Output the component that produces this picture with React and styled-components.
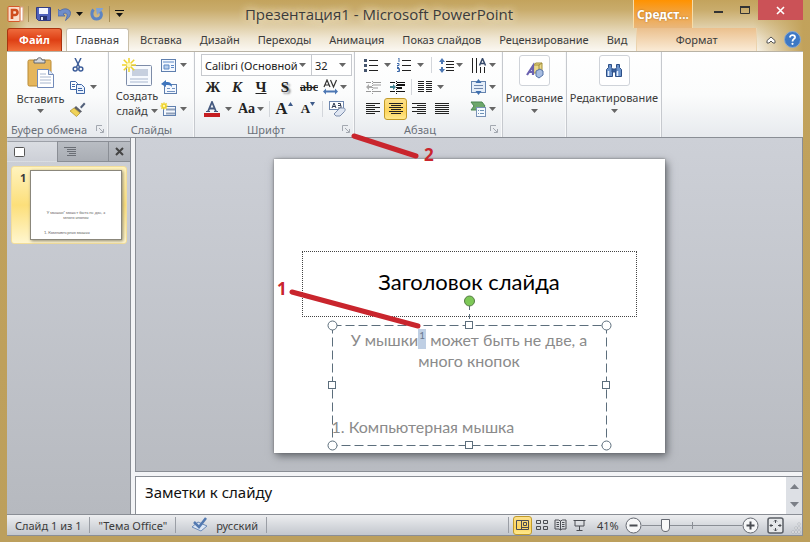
import { useState } from 'react'
import styled, { createGlobalStyle, css } from 'styled-components'

const GlobalStyle = createGlobalStyle`
    * {
        box-sizing: border-box;
    }

    body {
        margin: 0;
        background: #BC9F5C;
        font-family: 'Noto Sans', 'Open Sans', sans-serif;
        font-size: 12px;
        color: #3B3B3B;
    }

    button, select, textarea {
        font: inherit;
        color: inherit;
    }

    svg {
        display: block;
        flex: none;
    }
`

const Window = styled.div`
    display: flex;
    flex-direction: column;
    min-height: 100vh;
    padding: 0 7px 6px;
    background: linear-gradient(#C2A25B, #BC9F5C);
`

const Header = styled.header`
    background:
        linear-gradient(90deg, #C2A25B, transparent 20px, transparent calc(100% - 50px), #C2A25B),
        linear-gradient(#C3A35D 0px, #C9AC6C 10px, #DCC99E 24px, #EFE6D2 38px, #FBF8F2 51px);
`

const TitleBar = styled.div`
    display: flex;
    height: 28px;
`

const QuickAccess = styled.div`
    display: flex;
    align-items: center;
    gap: 3px;
    width: 118px;
`

const IconButton = styled.button`
    display: flex;
    align-items: center;
    justify-content: center;
    gap: ${({ $gap }) => $gap || 0}px;
    width: ${({ $width }) => $width || 24}px;
    height: ${({ $height }) => $height || 22}px;
    padding: 0;
    border: 1px solid transparent;
    border-radius: 3px;
    background: none;

    ${({ $active }) => $active && css`
        border-color: #C29B29;
        background: linear-gradient(#FCE08A, #FDD55E 60%, #FFE98E);
    `}

    &:hover {
        border-color: #E0C060;
    }
`

const Divider = styled.span`
    width: 1px;
    height: ${({ $height }) => $height || 16}px;
    background: ${({ $color }) => $color || '#D3D6DB'};
    margin: 0 ${({ $space }) => $space || 0}px;
`

const WindowTitle = styled.h1`
    flex: 1;
    margin: 0;
    font-family: 'Open Sans', sans-serif;
    font-size: 15px;
    line-height: 28px;
    font-weight: normal;
    text-align: center;
    white-space: nowrap;
    text-shadow: 0 0 8px #F4EAD0, 0 0 8px #F4EAD0;
`

const ContextTitle = styled.div`
    width: 60px;
    border: solid #F7DDA8;
    border-width: 0 1px;
    background: linear-gradient(#FF9200, #F3A23A 12px, #E9B77C);
    color: #FFF;
    font-weight: bold;
    line-height: 30px;
    text-align: center;
    text-shadow: 0 0 2px #A06820;
`

const WindowButtons = styled.div`
    display: flex;
    width: 110px;
    justify-content: flex-end;
`

const CloseButton = styled(IconButton)`
    border-radius: 0;
    background: #CB5257;
`

const TabRow = styled.nav`
    display: flex;
    height: 23px;
`

const Tab = styled.button`
    height: 23px;
    padding: 0 8px 1px;
    border: 1px solid transparent;
    border-bottom: none;
    border-radius: 3px 3px 0 0;
    background: none;
    white-space: nowrap;
    font-size: 11px;

    ${({ $active }) => $active && css`
        margin: 0 2px 0 4px;
        padding: 0 9px 1px;
        border-color: #C9BFA9;
        background: #FFF;
    `}
`

const FileTab = styled(Tab)`
    width: 56px;
    padding: 0 0 1px;
    border-color: #A9330F;
    background: linear-gradient(#EE6B3D, #DE3F14 50%, #F2703B);
    color: #FFF;
    font-weight: bold;
`

const ContextTab = styled(Tab)`
    width: 123px;
    margin-left: auto;
    border: solid #EBD3AE;
    border-width: 0 1px;
    border-radius: 0;
    background: linear-gradient(#EBC08D, #FAEBD6);
`

const HelpArea = styled.div`
    display: flex;
    align-items: center;
    justify-content: flex-end;
    width: 47px;
`

const Ribbon = styled.section`
    display: flex;
    height: 87px;
    border-top: 1px solid #B9B3A5;
    border-bottom: 1px solid #8A8E95;
    background: linear-gradient(#FFF, #FBFCFC 50%, #E7EAEE);
`

const Group = styled.section`
    display: flex;
    flex-direction: column;
    width: ${({ $width }) => $width}px;
    padding-top: 2px;
    border-right: 1px solid #C6C9CE;
    box-shadow: inset -1px 0 #F8F9FA;
`

const GroupBody = styled.div`
    display: flex;
    height: 67px;
    padding: 0 ${({ $space }) => $space || 0}px;
`

const GroupLabel = styled.footer`
    display: flex;
    align-items: center;
    height: 16px;
    color: #6A7079;
    font-size: 11px;

    span {
        flex: 1;
        text-align: center;
        white-space: nowrap;
    }

    button {
        margin: 0 4px;
    }
`

const Stack = styled.div`
    display: flex;
    flex-direction: column;
`

const Row = styled.div`
    display: flex;
    align-items: center;
    height: 22px;
`

const LargeButton = styled.button`
    display: flex;
    flex-direction: column;
    align-items: center;
    width: ${({ $width }) => $width}px;
    padding: ${({ $top }) => $top || 0}px 0 0;
    border: none;
    background: none;
    font-size: 11px;
    line-height: 15px;
    white-space: nowrap;
    gap: ${({ $gap }) => $gap || 0}px;
`

const Inline = styled.span`
    display: flex;
    align-items: center;
    gap: 3px;
`

const Framed = styled.span`
    display: flex;
    align-items: center;
    justify-content: center;
    width: 31px;
    height: 31px;
    border: 1px solid #CFD3D9;
    border-radius: 3px;
    background: #FFF;
`

const Combo = styled.label`
    display: flex;
    align-items: center;
    width: ${({ $width }) => $width}px;
    height: 22px;
    margin-right: -1px;
    border: 1px solid #C6C9CE;
    background: #FFF;
    padding-right: 5px;

    select {
        flex: 1;
        min-width: 0;
        height: 20px;
        padding: 0 0 0 3px;
        border: none;
        background: none;
        appearance: none;
        outline: none;
        font-size: 11px;
        color: #222;
    }
`

const Glyph = styled.span`
    font-family: 'Liberation Serif', serif;
    font-size: ${({ $size }) => $size || 15}px;
    line-height: 16px;
    font-weight: bold;
    color: #222;
    ${({ $italic }) => $italic && 'font-style: italic;'}
    ${({ $line }) => $line && `text-decoration: ${$line};`}
    ${({ $shadow }) => $shadow && 'text-shadow: 2px 2px 2px #888;'}
`

const Workspace = styled.main`
    display: flex;
    flex: 1;
    min-height: 0;
    border-right: 1px solid #8A8E95;
    background: linear-gradient(#CDD0D7, #B6B9BF);
`

const Pane = styled.aside`
    width: 124px;
    border-right: 1px solid #8A8E95;
    padding-top: 3px;
`

const PaneTabs = styled.div`
    display: flex;
    height: 21px;
`

const PaneTab = styled.button`
    width: ${({ $width }) => $width}px;
    padding: 0 0 0 6px;
    border: solid #8A8E95;
    border-width: 1px 0 1px 1px;
    background: linear-gradient(#B9BDC3, #A9ADB4);

    ${({ $active }) => $active && css`
        border-color: #9DA1A8 transparent transparent;
        background: linear-gradient(#DADDE2, #CDD0D7);
    `}
`

const Thumbnail = styled.button`
    display: flex;
    width: 116px;
    height: 78px;
    margin: 4px 0 0 4px;
    padding: 3px 4px 0 8px;
    border: 1px solid #F3DE9A;
    border-radius: 3px;
    background: linear-gradient(#FFF3BE, #FCDF7A 50%, #FFF6CF);
    font-size: 11px;
    font-weight: bold;
    text-align: left;
`

const ThumbSlide = styled.span`
    display: flex;
    flex-direction: column;
    width: 92px;
    height: 70px;
    margin-left: auto;
    padding: 39px 13px 0;
    border: 1px solid #8B877B;
    background: #FFF;
    box-shadow: 1px 1px 3px #8F8A78;
    font: 4px/5px 'Lato', sans-serif;
    color: #666;
    text-align: center;
    white-space: nowrap;
`

const ThumbNote = styled.span`
    margin-top: 10px;
    text-align: left;
`

const Editor = styled.div`
    display: flex;
    flex-direction: column;
    flex: 1;
    min-width: 0;
    border-left: 4px solid #F3F4F6;
`

const Canvas = styled.section`
    display: flex;
    align-items: center;
    justify-content: center;
    flex: 1;
    border-left: 1px solid #8A8E95;
    padding-top: 3px;
`

const Slide = styled.article`
    position: relative;
    width: 391px;
    aspect-ratio: 4 / 3;
    padding-top: 92px;
    background: #FFF;
    box-shadow: 2px 3px 8px #606369, 0 0 2px #777;
    font-family: 'Lato', 'Open Sans', sans-serif;
`

const SlideTitle = styled.h2`
    display: flex;
    align-items: center;
    justify-content: center;
    height: 66px;
    margin: 0 28px 8px;
    padding-bottom: 6px;
    border: 1px dotted #444;
    color: #000;
    font-size: 22px;
    font-weight: normal;
`

const TextFrame = styled.div`
    position: relative;
    height: 121px;
    margin: 0 58px;
    padding-top: 4px;
    color: #8B8B8B;
    font-size: 16px;
    line-height: 21px;

    p {
        margin: 0;
        text-align: center;
    }

    ol {
        margin: 45px 0 0;
        padding: 0;
        list-style-position: inside;
    }
`

const Selected = styled.sup`
    display: inline-block;
    height: 20px;
    padding: 0 1px;
    background: #BFCFE4;
    color: #6B7A90;
    font-size: 10px;
    line-height: 13px;
    vertical-align: top;
`

const FrameHandles = styled.svg`
    position: absolute;
    left: 0;
    top: 0;
    overflow: visible;
`

const Callouts = styled.svg`
    position: absolute;
    left: 0;
    top: 0;
    overflow: visible;
    font: bold 17px 'Open Sans', sans-serif;
    pointer-events: none;
`

const Notes = styled.div`
    display: flex;
    height: 43px;
    border: solid #8A8E95;
    border-width: 1px 0 0;
    padding-top: 4px;
    background: #F3F4F6;

    textarea {
        flex: 1;
        resize: none;
        border: solid #8A8E95;
        border-width: 1px 0 0 1px;
        padding: 5px 9px;
        outline: none;
        overflow: hidden;
        background: #FFF;
        color: #111;
        font-size: 15px;
        line-height: 20px;
    }
`

const ScrollBar = styled.div`
    display: flex;
    flex-direction: column;
    justify-content: space-around;
    width: 16px;
    border-top: 1px solid #8A8E95;
    background: #DDE0E5;
`

const StatusBar = styled.footer`
    display: flex;
    align-items: center;
    height: 22px;
    border: 1px solid #8A8E95;
    border-width: 1px 1px 1px 0;
    padding-left: 8px;
    background: linear-gradient(#EDEEF0, #D3D6DB 60%, #C3C7CD);
    font-size: 11px;
    white-space: nowrap;
`

const Spacer = styled.span`
    flex: 1;
`

const Percent = styled.span`
    width: 36px;
    padding-left: 8px;
`

const Zoom = styled.input`
    width: 100px;
    height: 16px;
    margin: 0;
    appearance: none;
    background:
        linear-gradient(#8A8E95, #8A8E95) 50% 50% / 1px 7px no-repeat,
        linear-gradient(#8A8E95, #8A8E95) 0 50% / 100% 1px no-repeat;

    &::-webkit-slider-thumb {
        appearance: none;
        width: 9px;
        height: 13px;
        border: 1px solid #666A72;
        border-radius: 1px 1px 5px 5px;
        background: #FAFAFA;
    }
`

const Arrow = ({ color = '#666' }) => (
    <svg width="7" height="4" viewBox="0 0 7 4" aria-hidden="true">
        <path d="M0 0h7L3.5 4z" fill={color} />
    </svg>
)

const Launcher = () => (
    <IconButton $width={9} $height={12} aria-label="Параметры">
        <svg width="8" height="8" viewBox="0 0 8 8" fill="none" stroke="#A3A8B0">
            <path d="M.5 6V.5H6M3 3l4 4M7.500 4v3.500H4" />
        </svg>
    </IconButton>
)

const PowerPointLogo = () => (
    <svg width="17" height="17" viewBox="0 0 17 17">
        <rect x="3" y="1" width="13" height="14" fill="#FFF" stroke="#D9A183" />
        <rect x="1" y=".5" width="12" height="15" rx="1" fill="#F9DCCB" stroke="#D5592A" />
        <path d="M5 13V4h3a2.300 2.300 0 0 1 0 5H5" fill="none" stroke="#CF4B1D" strokeWidth="2.600" />
    </svg>
)

const SaveIcon = () => (
    <svg width="15" height="14" viewBox="0 0 15 14">
        <path d="M.5.5h14v13h-12l-2-2z" fill="#5062BC" stroke="#323C83" />
        <path d="M3 1h9v6H3z" fill="#F6F8FF" />
        <path d="M4 9h7v4H4z" fill="#29336E" />
        <path d="M5 10h2v3H5z" fill="#E8EBFA" />
    </svg>
)

const UndoIcon = () => (
    <svg width="13" height="13" viewBox="0 0 13 13">
        <path d="M0 1l2 2c4-4 11-2 10.500 2.500-.3 3-2.500 5-5 7 1-3 2-4.500 1.500-6-.6-1.800-2.500-1.600-4-.5l2 2H0z" fill="#6F8DC8" stroke="#4C68A3" strokeWidth=".8" />
    </svg>
)

const RedoIcon = () => (
    <svg width="13" height="13" viewBox="0 0 13 13" fill="none">
        <path d="M3.500 1.500C.5 5 2 11 6.500 11c5 0 6-5 3.500-7.500" stroke="#5C84C2" strokeWidth="3" />
        <path d="M6 0h7v1L7 7z" fill="#7FA2D6" />
    </svg>
)

const PasteIcon = () => (
    <svg width="28" height="31" viewBox="0 0 28 31">
        <rect x="1" y="3" width="23" height="26" rx="1.500" fill="#E5B65C" stroke="#B98A35" />
        <path d="M7 6V3h3c0-3 5-3 5 0h3v3z" fill="#D5D8DC" stroke="#62666C" />
        <path d="M10.500 12.500h11l5 5v13h-16z" fill="#FFF" stroke="#718AB8" />
        <path d="M21.500 12.500v5h5" fill="#DDE6F4" stroke="#718AB8" />
        <path d="M13 17h6M13 20h11M13 23h11M13 26h11" stroke="#A9B7CE" />
    </svg>
)

const CutIcon = () => (
    <svg width="12" height="14" viewBox="0 0 12 14" fill="none" stroke="#3D5D99" strokeWidth="1.500">
        <path d="M3 0l4.500 9M9 0L4.500 9" />
        <circle cx="3.200" cy="11" r="2" />
        <circle cx="8.800" cy="11" r="2" />
    </svg>
)

const CopyIcon = () => (
    <svg width="15" height="13" viewBox="0 0 15 13" stroke="#3E66A6">
        <path d="M.5.5h5l2 2v6h-7z" fill="#FFF" />
        <path d="M2 3.500h3M2 5.500h3" />
        <path d="M6.500 3.500h5l3 3v6h-8z" fill="#EAF2FD" />
        <path d="M8 7.500h4M8 9.500h5" />
    </svg>
)

const BrushIcon = () => (
    <svg width="16" height="15" viewBox="0 0 16 15">
        <path d="M10 5l4-4.500 1.500 1.500-4 4.500z" fill="#52607A" />
        <path d="M6 4l6 5.500-2 1.500-6-5z" fill="#5D6069" />
        <path d="M4 6l6 5-3.500 3.500L0 9z" fill="#F0D257" stroke="#A98C27" strokeWidth=".7" />
    </svg>
)

const Spark = ({ r = 7 }) => (
    <g stroke="#F0D42C" strokeWidth="1.500">
        <path d={`M${-r} 0H${r}M0 ${-r}V${r}M${-r * .75} ${-r * .75}L${r * .75} ${r * .75}M${r * .75} ${-r * .75}L${-r * .75} ${r * .75}`} />
        <circle r={r / 3} fill="#FFF8B8" stroke="none" />
    </g>
)

const NewSlideIcon = () => (
    <svg width="31" height="31" viewBox="0 0 31 31">
        <rect x="4.500" y="8.500" width="25" height="20" rx="1" fill="#F7FAFE" stroke="#7D8CA8" />
        <path d="M10 12h16v7H10z" fill="#C7D0DF" />
        <path d="M8 22h18M8 25h18" stroke="#A9B7CE" />
        <g transform="translate(7 8)"><Spark r={7} /></g>
    </svg>
)

const LayoutIcon = ({ kind }) => (
    <svg width="17" height="15" viewBox="0 0 17 15">
        <rect x={kind === 'layout' ? 1.5 : 3.5} y={kind === 'layout' ? 1.5 : 4.5} width={kind === 'layout' ? 14 : 12} height={kind === 'layout' ? 12 : 9} fill="#F4F8FE" stroke="#5F7FAE" />
        {kind === 'layout' && <path d="M3 4h11M4 7h5v4H4zM11 7.500h3M11 9.500h3" stroke="#5F8BC8" fill="#B8CEEA" />}
        {kind === 'reset' && (
            <>
                <path d="M6 8.500h3M11 8.500h3M6 11.500h8" stroke="#7292C1" />
                <path d="M0 4l5-4v2c5 0 6 2 6 5-2-2-3-2-6-2v2z" fill="#3E75BD" />
            </>
        )}
        {kind === 'section' && (
            <>
                <path d="M6 7.500h9M6 11.500h9" stroke="#8FA0B9" strokeWidth="2" />
                <g transform="translate(4 4)"><Spark r={3.500} /></g>
            </>
        )}
    </svg>
)

// line ends for each way to set a paragraph
const lineSpans = {
    left: [[0, 14], [0, 9]],
    center: [[0, 14], [2, 12]],
    right: [[0, 14], [5, 14]],
    justify: [[0, 14], [0, 14]],
}

const AlignIcon = ({ kind }) => (
    <svg width="14" height="12" viewBox="0 0 14 12" stroke="#222">
        {[0, 1, 2, 3, 4, 5].map(i => {
            const [from, to] = lineSpans[kind][i % 2]
            return <path key={i} d={`M${from} ${i * 2 + .5}H${to}`} />
        })}
    </svg>
)

const ListIcon = ({ numbered }) => (
    <svg width="14" height="14" viewBox="0 0 14 14">
        <path d="M5 2.500h9M5 7.500h9M5 12.500h9" stroke="#222" />
        {numbered
            ? <path d="M1 0h1v4M0 5.500h2v2H0v2h2M0 10.500h2.500v3H0M1 12h1" fill="none" stroke="#3C68A8" />
            : <path d="M0 1h3v3H0zM0 6h3v3H0zM0 11h3v3H0z" fill="#45556E" />}
    </svg>
)

const IndentIcon = ({ muted }) => (
    <svg width="15" height="13" viewBox="0 0 15 13" stroke={muted ? '#999' : '#111'}>
        <path d="M0 1.500h5M7 1.500h8M0 10.500h5M7 10.500h8" />
        <path d="M7 4h8M7 7h5" strokeWidth={muted ? 1 : 2} />
        <path d="M6.500 0v13" strokeDasharray="1 1" />
        <path d={muted ? 'M0 6l3-3v2h3v2H3v2z' : 'M6 6L3 3v2H0v2h3v2z'} fill={muted ? '#AAA' : '#3F8090'} stroke="none" />
    </svg>
)

const ColumnsIcon = () => (
    <svg width="14" height="12" viewBox="0 0 14 12" stroke="#222">
        <path d="M0 .5h6M8 .5h6M0 2.500h6M8 2.500h6M0 4.500h6M8 4.500h6M0 6.500h6M8 6.500h6M0 8.500h6M8 8.500h6M0 10.500h6M8 10.500h6" />
    </svg>
)

const SpacingIcon = () => (
    <svg width="15" height="15" viewBox="0 0 15 15">
        <path d="M7 3.500h8M7 6.500h8M7 9.500h8M7 12.500h8" stroke="#222" />
        <path d="M3 0l3 4H4v2H2V4H0zM3 15l3-4H4V9H2v2H0z" fill="#4C77B3" />
    </svg>
)

const DirectionIcon = () => (
    <svg width="16" height="15" viewBox="0 0 16 15" fill="none">
        <path d="M1.500 0v15M5.500 0v15M9.500 9v6M13.500 9v6" stroke="#222" />
        <path d="M8.500 7.500L11.500.5l3 7M9.500 5.500h4" stroke="#374A6A" strokeWidth="1.500" />
    </svg>
)

const VerticalIcon = () => (
    <svg width="17" height="16" viewBox="0 0 17 16">
        <rect x="1.500" y="2.500" width="14" height="11" fill="#E5EEF9" stroke="#6584AF" />
        <path d="M4 6.500h9M4 9.500h9" stroke="#6F87AD" />
        <path d="M8.500 0l3 4h-6zM8.500 16l3-4h-6z" fill="#3F6FAE" />
    </svg>
)

const SmartArtIcon = () => (
    <svg width="17" height="16" viewBox="0 0 17 16">
        <path d="M1 1h11l3 4-3 4H1l3-4z" fill="#6DA76B" stroke="#4B8651" />
        <rect x="6.500" y="6.500" width="9" height="9" fill="#F5FAFF" stroke="#7891B5" />
        <path d="M8 9.500h1M10 9.500h4M8 12.500h1M10 12.500h4" stroke="#6F93B7" />
    </svg>
)

const SpacingLettersIcon = () => (
    <svg width="15" height="16" viewBox="0 0 15 16" fill="none">
        <path d="M1 8l3-7 3 7M2 6h4M7.500 1l3 7 3-7" stroke="#333" strokeWidth="1.200" />
        <path d="M0 12.500l3-3v2h9v-2l3 3-3 3v-2H3v2z" fill="#4C77B3" />
    </svg>
)

const EraserIcon = () => (
    <svg width="17" height="16" viewBox="0 0 17 16" fill="none">
        <rect x=".5" y=".5" width="14" height="8" fill="#FFF" stroke="#6D86AE" />
        <path d="M3 7l2-5 2 5M4 5.500h2M9 2.500h2.500v2H9h3v2.500H9" stroke="#333D52" />
        <path d="M5 13l6-6h4c2 1 1 3 0 4l-4 4H7z" fill="#DFE6F2" stroke="#7C8DAC" />
    </svg>
)

const FontColorIcon = () => (
    <svg width="16" height="16" viewBox="0 0 16 16">
        <path d="M4 10.500L8 1l4 9.500M5.500 7.500h5" fill="none" stroke="#45597F" strokeWidth="1.800" />
        <path d="M2 10.500h4M10 10.500h4" stroke="#45597F" />
        <path d="M0 12h16v4H0z" fill="#C51E22" />
    </svg>
)

const ShapesIcon = () => (
    <svg width="18" height="17" viewBox="0 0 18 17">
        <path d="M7 3l3-2h6v8l-3 2H7z" fill="#EBD98A" stroke="#A28F3B" />
        <path d="M7 3h6v8M13 3l3-2" fill="none" stroke="#A28F3B" />
        <path d="M1 13l6-9v9M3 10h4" fill="none" stroke="#6B62B0" strokeWidth="2.200" />
        <path d="M10 9l4-2 3 2v4l-4 3-3-2z" fill="#A7BDE1" stroke="#5472A7" />
    </svg>
)

const BinocularsIcon = () => (
    <svg width="16" height="15" viewBox="0 0 16 15" stroke="#2D4F86">
        <path d="M2.500 1.500h3v3l1 2v7h-6v-7l2-2zM10.500 1.500h3v3l2 2v7h-6v-7l1-2z" fill="#6B93CB" />
        <path d="M6 6h4v3H6z" fill="#3A619D" />
        <path d="M2.500 8v5M11.500 8v5" stroke="#E5F0FF" strokeWidth="1.500" />
    </svg>
)

const CheckIcon = () => (
    <svg width="18" height="16" viewBox="0 0 18 16">
        <path d="M1 10l6-5 9 4-6 5z" fill="#DCE7F5" stroke="#6C8BB8" />
        <path d="M3 5l5 5 7-9" fill="none" stroke="#5379B0" strokeWidth="2.500" />
    </svg>
)

const ViewIcon = ({ kind }) => (
    <svg width="13" height="12" viewBox="0 0 13 12" fill="none" stroke="#4A4D53">
        {kind === 'normal' && <path d="M.5 1.500h12v9H.5zM5.500 1.500v9M7.500 3.500h3v3h-3zM5.500 8.500h7" />}
        {kind === 'sorter' && <path d="M1.500 1.500h4v3h-4zM8.500 1.500h4v3h-4zM1.500 7.500h4v3h-4zM8.500 7.500h4v3h-4z" />}
        {kind === 'reading' && <path d="M6.500 2L4.500 1H1v9h4l1.500 1 1.500-1h4V1H8.500zv9M2.500 3.500h2.500M2.500 5.500h2.500M2.500 7.500h2.500M8 3.500h2.500M8 5.500h2.500M8 7.500h2.500" />}
        {kind === 'show' && <path d="M.5 1.500h12M2 2v5h9V2M6.500 7v4M3.500 11.500h6" />}
    </svg>
)

const RoundIcon = ({ plus }) => (
    <svg width="17" height="17" viewBox="0 0 17 17" stroke="#666A72">
        <circle cx="8.500" cy="8.500" r="7.500" fill="#F6F7F8" />
        <path d={plus ? 'M4.500 8.500h8M8.500 4.500v8' : 'M4.500 8.500h8'} strokeWidth="2" stroke="#4A4D53" />
    </svg>
)

const FitIcon = () => (
    <svg width="17" height="17" viewBox="0 0 17 17" fill="none" stroke="#4A4D53">
        <rect x="1" y="1" width="15" height="15" rx="2" fill="#E6E8EA" stroke="#5B5F66" strokeWidth="1.500" />
        <path d="M8.500 3v3M8.500 11v3M3 8.500h3M11 8.500h3M7 4.500l1.500-1.500L10 4.500M7 12.500l1.500 1.500 1.500-1.500M4.500 7L3 8.500 4.500 10M12.500 7L14 8.500 12.500 10" />
    </svg>
)

const ribbonTabs = ['Главная', 'Вставка', 'Дизайн', 'Переходы', 'Анимация', 'Показ слайдов', 'Рецензирование', 'Вид']

const views = [
    ['normal', 'Обычный'],
    ['sorter', 'Сортировщик слайдов'],
    ['reading', 'Режим чтения'],
    ['show', 'Показ слайдов'],
]

const alignments = [
    ['left', 'По левому краю'],
    ['center', 'По центру'],
    ['right', 'По правому краю'],
    ['justify', 'По ширине'],
]

const TitleArea = () => (
    <TitleBar>
        <QuickAccess>
            <PowerPointLogo />
            <Divider $color="#A98F57" $space={1} />
            <IconButton $width={22} aria-label="Сохранить"><SaveIcon /></IconButton>
            <IconButton $width={26} $gap={5} aria-label="Отменить"><UndoIcon /><Arrow color="#111" /></IconButton>
            <IconButton $width={20} aria-label="Повторить"><RedoIcon /></IconButton>
            <Divider $color="#A98F57" />
            <IconButton $width={12} aria-label="Настройка панели">
                <svg width="9" height="8" viewBox="0 0 9 8"><path d="M0 .5h9" stroke="#111" /><path d="M1 3h7L4.500 7z" fill="#111" /></svg>
            </IconButton>
        </QuickAccess>
        <WindowTitle>Презентация1 - Microsoft PowerPoint</WindowTitle>
        <ContextTitle>Средст...</ContextTitle>
        <WindowButtons>
            <IconButton $width={26} aria-label="Свернуть">
                <svg width="9" height="3"><path d="M0 1h9v2H0z" fill="#333" /></svg>
            </IconButton>
            <IconButton $width={27} $height={20} aria-label="Развернуть">
                <svg width="10" height="8" fill="none"><path d="M.5 1h9v6.500h-9z" stroke="#333" /><path d="M0 1h10" stroke="#333" strokeWidth="2" /></svg>
            </IconButton>
            <CloseButton $width={45} $height={20} aria-label="Закрыть">
                <svg width="9" height="9" stroke="#FFF" strokeWidth="1.600"><path d="M1 1l7 7M8 1L1 8" /></svg>
            </CloseButton>
        </WindowButtons>
    </TitleBar>
)

const ClipboardGroup = () => (
    <Group $width={102}>
        <GroupBody $space={8}>
            <LargeButton $width={52} $gap={3} $top={3}>
                <PasteIcon />
                <span>Вставить</span>
                <Arrow />
            </LargeButton>
            <Stack>
                <IconButton $width={24} aria-label="Вырезать"><CutIcon /></IconButton>
                <IconButton $width={34} $gap={5} aria-label="Копировать"><CopyIcon /><Arrow /></IconButton>
                <IconButton $width={24} aria-label="Формат по образцу"><BrushIcon /></IconButton>
            </Stack>
        </GroupBody>
        <GroupLabel><span>Буфер обмена</span><Launcher /></GroupLabel>
    </Group>
)

const SlidesGroup = () => (
    <Group $width={86}>
        <GroupBody $space={6}>
            <LargeButton $width={48} $top={3}>
                <NewSlideIcon />
                <span>Создать</span>
                <Inline>слайд <Arrow /></Inline>
            </LargeButton>
            <Stack>
                <IconButton $width={29} $gap={3} aria-label="Макет"><LayoutIcon kind="layout" /><Arrow /></IconButton>
                <IconButton $width={20} aria-label="Восстановить"><LayoutIcon kind="reset" /></IconButton>
                <IconButton $width={29} $gap={3} aria-label="Раздел"><LayoutIcon kind="section" /><Arrow /></IconButton>
            </Stack>
        </GroupBody>
        <GroupLabel><span>Слайды</span></GroupLabel>
    </Group>
)

const FontGroup = () => (
    <Group $width={160}>
        <GroupBody $space={6}>
            <Stack>
                <Row>
                    <Combo $width={111}>
                        <select aria-label="Шрифт"><option>Calibri (Основной</option></select>
                        <Arrow />
                    </Combo>
                    <Combo $width={41}>
                        <select aria-label="Размер шрифта"><option>32</option></select>
                        <Arrow />
                    </Combo>
                </Row>
                <Row>
                    <IconButton aria-label="Полужирный"><Glyph>Ж</Glyph></IconButton>
                    <IconButton aria-label="Курсив"><Glyph $italic>К</Glyph></IconButton>
                    <IconButton aria-label="Подчеркнутый"><Glyph $line="underline">Ч</Glyph></IconButton>
                    <IconButton aria-label="Тень"><Glyph $shadow>S</Glyph></IconButton>
                    <IconButton aria-label="Зачеркнутый"><Glyph $size={12} $line="line-through">abc</Glyph></IconButton>
                    <IconButton $width={28} $gap={2} aria-label="Интервал"><SpacingLettersIcon /><Arrow /></IconButton>
                </Row>
                <Row>
                    <IconButton $width={34} $gap={5} aria-label="Цвет текста"><FontColorIcon /><Arrow /></IconButton>
                    <IconButton $width={32} $gap={2} aria-label="Регистр"><Glyph $size={14}>Aa</Glyph><Arrow /></IconButton>
                    <Divider $space={2} />
                    <IconButton aria-label="Увеличить размер шрифта">
                        <Glyph $size={17}>A</Glyph>
                        <svg width="5" height="14"><path d="M0 4l2.500-4L5 4z" fill="#3E5B8A" /></svg>
                    </IconButton>
                    <IconButton aria-label="Уменьшить размер шрифта">
                        <Glyph $size={13}>A</Glyph>
                        <svg width="5" height="14"><path d="M0 0l2.500 4L5 0z" fill="#3E5B8A" /></svg>
                    </IconButton>
                    <Divider $space={2} />
                    <IconButton aria-label="Удалить форматирование"><EraserIcon /></IconButton>
                </Row>
            </Stack>
        </GroupBody>
        <GroupLabel><span>Шрифт</span><Launcher /></GroupLabel>
    </Group>
)

const ParagraphGroup = () => {
    const [align, setAlign] = useState('center')

    return (
        <Group $width={148}>
            <GroupBody $space={6}>
                <Stack>
                    <Row>
                        <IconButton $width={33} $gap={6} aria-label="Маркеры"><ListIcon /><Arrow /></IconButton>
                        <IconButton $width={33} $gap={6} aria-label="Нумерация"><ListIcon numbered /><Arrow /></IconButton>
                        <Divider $space={4} />
                        <IconButton $width={29} $gap={2} aria-label="Междустрочный интервал"><SpacingIcon /><Arrow /></IconButton>
                    </Row>
                    <Row>
                        <IconButton aria-label="Уменьшить отступ"><IndentIcon muted /></IconButton>
                        <IconButton aria-label="Увеличить отступ"><IndentIcon /></IconButton>
                        <Divider $space={2} />
                        <IconButton $width={34} $gap={5} aria-label="Колонки"><ColumnsIcon /><Arrow /></IconButton>
                    </Row>
                    <Row>
                        {alignments.map(([kind, label]) => (
                            <IconButton key={kind} $width={23} $active={align === kind} onClick={() => setAlign(kind)} aria-label={label}>
                                <AlignIcon kind={kind} />
                            </IconButton>
                        ))}
                    </Row>
                </Stack>
                <Stack>
                    <IconButton $width={36} $gap={2} aria-label="Направление текста"><DirectionIcon /><Arrow /></IconButton>
                    <IconButton $width={36} $gap={2} aria-label="Выровнять текст"><VerticalIcon /><Arrow /></IconButton>
                    <IconButton $width={36} $gap={2} aria-label="Преобразовать в SmartArt"><SmartArtIcon /><Arrow /></IconButton>
                </Stack>
            </GroupBody>
            <GroupLabel><span>Абзац</span><Launcher /></GroupLabel>
        </Group>
    )
}

const SlideView = () => (
    <Slide>
        <SlideTitle>Заголовок слайда</SlideTitle>
        <TextFrame>
            <p>У мышки<Selected>1</Selected> может быть не две, а<br />много кнопок</p>
            <ol><li>Компьютерная мышка</li></ol>
            <FrameHandles width="275" height="121" fill="#FFF" stroke="#5C6E7C">
                <rect x=".5" y=".5" width="274" height="120" fill="none" strokeDasharray="9 4" />
                <path d="M137.500-20V0" strokeDasharray="5 4" />
                <circle cx="137.500" cy="-24" r="5" fill="#7DC857" stroke="#557B45" />
                {[0.5, 274.5].map(x => [0.5, 120.5].map(y => <circle key={x + y} cx={x} cy={y} r="4.500" />))}
                {[[137, 0], [137, 120], [0, 60], [274, 60]].map(([x, y]) => (
                    <rect key={`${x}-${y}`} x={x - 3.5} y={y - 3.5} width="7" height="7" />
                ))}
            </FrameHandles>
        </TextFrame>
        <Callouts width="391" height="293" fill="#C9252D">
            <g stroke="#C9252D" strokeWidth="5" strokeLinecap="round">
                <path d="M18 133l126 34M80-23l62 20" />
            </g>
            <text x="3" y="136">1</text>
            <text x="150" y="2">2</text>
        </Callouts>
    </Slide>
)

const SlidesPane = () => (
    <Pane>
        <PaneTabs>
            <PaneTab $width={50} $active aria-label="Слайды">
                <svg width="11" height="10"><rect x=".5" y=".5" width="10" height="9" rx="1" fill="#FFF" stroke="#555" /></svg>
            </PaneTab>
            <PaneTab $width={51} aria-label="Структура">
                <svg width="12" height="10" stroke="#6A6E75"><path d="M0 .5h12M3 2.500h9M3 4.500h9M5 6.500h7M3 8.500h9" /></svg>
            </PaneTab>
            <PaneTab $width={22} aria-label="Закрыть область">
                <svg width="9" height="9" stroke="#444" strokeWidth="2"><path d="M1 1l7 7M8 1L1 8" /></svg>
            </PaneTab>
        </PaneTabs>
        <Thumbnail>
            1
            <ThumbSlide>
                <span>У мышки¹ может быть не две, а<br />много кнопок</span>
                <ThumbNote>1. Компьютерная мышка</ThumbNote>
            </ThumbSlide>
        </Thumbnail>
    </Pane>
)

const Status = () => {
    const [view, setView] = useState('normal')
    const [zoom, setZoom] = useState(41)

    return (
        <StatusBar>
            <span>Слайд 1 из 1</span>
            <Divider $color="#9A9EA5" $space={8} />
            <span>"Тема Office"</span>
            <Divider $color="#9A9EA5" $space={8} />
            <IconButton $width={32} $height={20} aria-label="Правописание"><CheckIcon /></IconButton>
            <span>русский</span>
            <Divider $color="#9A9EA5" $space={8} />
            <Spacer />
            <Divider $color="#9A9EA5" $space={4} />
            {views.map(([kind, label]) => (
                <IconButton key={kind} $width={19} $height={19} $active={view === kind} onClick={() => setView(kind)} aria-label={label}>
                    <ViewIcon kind={kind} />
                </IconButton>
            ))}
            <Percent>{zoom}%</Percent>
            <IconButton $width={17} $height={17} aria-label="Уменьшить" onClick={() => setZoom(Math.max(25, zoom - 10))}><RoundIcon /></IconButton>
            <Zoom type="range" min="25" max="100" value={zoom} onChange={e => setZoom(Number(e.target.value))} aria-label="Масштаб" />
            <IconButton $width={17} $height={17} aria-label="Увеличить" onClick={() => setZoom(Math.min(100, zoom + 10))}><RoundIcon plus /></IconButton>
            <IconButton $width={32} $height={19} aria-label="Вписать слайд"><FitIcon /></IconButton>
            <svg width="11" height="18" fill="#FFF" stroke="#9A9EA5" strokeWidth=".5">
                <path d="M7 7h2v2H7zM4 11h2v2H4zM7 11h2v2H7zM1 15h2v2H1zM4 15h2v2H4zM7 15h2v2H7z" />
            </svg>
        </StatusBar>
    )
}

const App = () => {
    const [tab, setTab] = useState('Главная')

    return (
        <Window>
            <GlobalStyle />
            <Header>
                <TitleArea />
                <TabRow>
                    <FileTab>Файл</FileTab>
                    {ribbonTabs.map(name => (
                        <Tab key={name} $active={tab === name} onClick={() => setTab(name)}>{name}</Tab>
                    ))}
                    <ContextTab>Формат</ContextTab>
                    <HelpArea>
                        <IconButton $width={20} aria-label="Свернуть ленту">
                            <svg width="10" height="8" fill="#FFF" stroke="#555"><path d="M5 1L1 4.500v2.500h2l2-2 2 2h2V4.500z" /></svg>
                        </IconButton>
                        <IconButton $width={22} aria-label="Справка">
                            <svg width="17" height="17" viewBox="0 0 17 17">
                                <circle cx="8.500" cy="8.500" r="8" fill="#3E78C4" stroke="#8BA9D0" />
                                <path d="M6 6.500c0-3.500 5.500-3 5 0-.3 1.500-2.500 1.500-2.500 4" fill="none" stroke="#FFF" strokeWidth="1.800" />
                                <circle cx="8.500" cy="12.800" r="1.100" fill="#FFF" />
                            </svg>
                        </IconButton>
                    </HelpArea>
                </TabRow>
            </Header>
            <Ribbon>
                <ClipboardGroup />
                <SlidesGroup />
                <FontGroup />
                <ParagraphGroup />
                <Group $width={64}>
                    <LargeButton $width={63} $gap={4} $top={1}>
                        <Framed><ShapesIcon /></Framed>
                        <span>Рисование</span>
                        <Arrow />
                    </LargeButton>
                </Group>
                <Group $width={95}>
                    <LargeButton $width={94} $gap={4} $top={1}>
                        <Framed><BinocularsIcon /></Framed>
                        <span>Редактирование</span>
                        <Arrow />
                    </LargeButton>
                </Group>
            </Ribbon>
            <Workspace>
                <SlidesPane />
                <Editor>
                    <Canvas><SlideView /></Canvas>
                    <Notes>
                        <textarea aria-label="Заметки" defaultValue="Заметки к слайду" />
                        <ScrollBar>
                            <IconButton $width={16} $height={16} aria-label="Вверх">
                                <svg width="9" height="5"><path d="M0 5l4.500-5L9 5z" fill="#7B7F87" /></svg>
                            </IconButton>
                            <IconButton $width={16} $height={16} aria-label="Вниз">
                                <svg width="9" height="5"><path d="M0 0l4.500 5L9 0z" fill="#7B7F87" /></svg>
                            </IconButton>
                        </ScrollBar>
                    </Notes>
                </Editor>
            </Workspace>
            <Status />
        </Window>
    )
}

export default App
